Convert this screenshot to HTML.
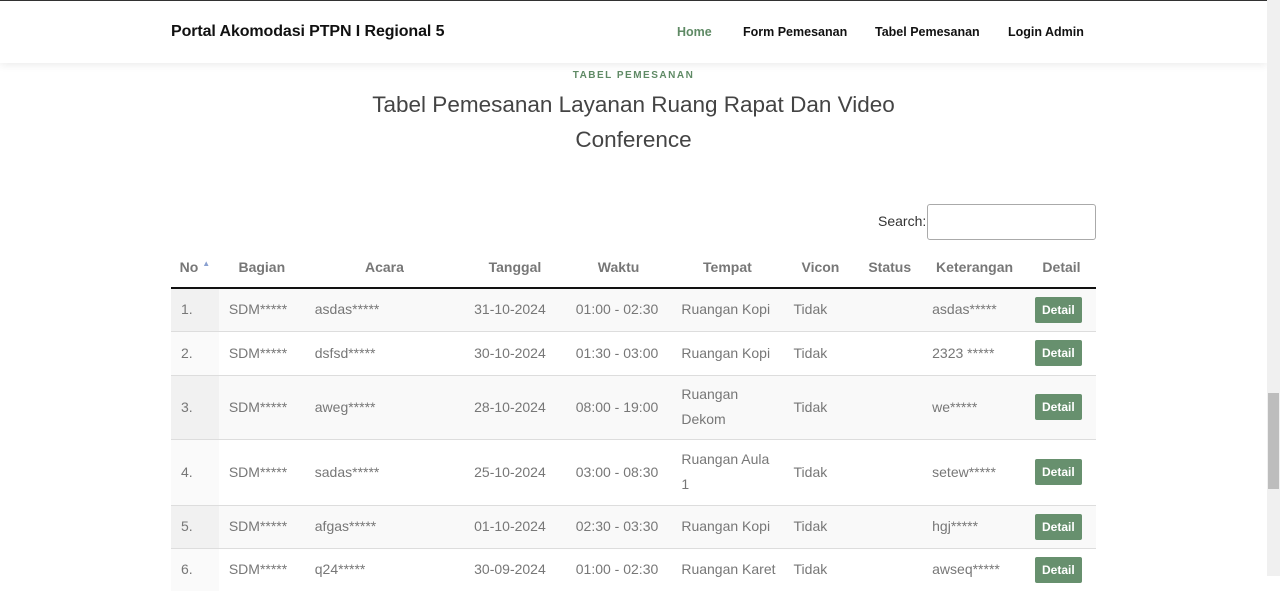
<!DOCTYPE html>
<html><head><meta charset="utf-8"><style>
*{box-sizing:border-box;margin:0;padding:0}
body{width:1280px;height:576px;overflow:hidden;background:#fff;font-family:"Liberation Sans",Roboto,sans-serif;position:relative}
.top{position:absolute;left:0;top:0;width:1267px;height:1px;background:#333}
.nav{position:absolute;left:0;top:1px;width:1267px;height:62px;background:#fff;box-shadow:0 2px 8px rgba(0,0,0,.08)}
.brand{position:absolute;left:171px;top:22px;font-weight:bold;font-size:16px;color:#111;letter-spacing:-0.1px}
.nav a{position:absolute;top:24px;font-size:12.5px;font-weight:bold;color:#111;text-decoration:none}
.sb{position:absolute;right:0;top:0;width:13px;height:576px;background:#f0f0f0}
.thumb{position:absolute;right:1px;top:393px;width:11px;height:96px;background:#bdbdbd}
.kick{position:absolute;left:0;width:1267px;top:70px;text-align:center;font-size:10px;font-weight:bold;letter-spacing:1.5px;color:#5f8a65}
h1{position:absolute;left:0;width:1267px;top:87px;text-align:center;font-weight:normal;font-size:22.5px;line-height:35px;color:#444}
.search{position:absolute;left:878px;top:213px;font-size:14px;color:#333}
.inp{position:absolute;left:927px;top:204px;width:169px;height:36px;border:1px solid #aaa;border-radius:3px}
table{position:absolute;left:171px;top:246px;width:925px;border-collapse:collapse;font-size:14px;color:#777}
th{height:42px;border-bottom:2px solid #111;font-weight:bold;color:#777;text-align:center}
td{padding:0 8px 0 10px;border-top:1px solid #ddd;line-height:25px}
tr.o td{background:#f9f9f9}
tr.o td:first-child{background:#f1f1f1}
tr.e td:first-child{background:#fafafa}
.btn{display:inline-block;background:#67906e;color:#fff;font-weight:bold;font-size:12px;padding:0 7px;line-height:26px;border-radius:2px;margin-left:-2px}
.nw{white-space:nowrap}
</style></head><body>
<div class="top"></div>
<div class="nav"><div class="brand">Portal Akomodasi PTPN I Regional 5</div>
<a style="left:677px;color:#5f8a65">Home</a><a style="left:743px">Form Pemesanan</a><a style="left:875px">Tabel Pemesanan</a><a style="left:1008px">Login Admin</a></div>
<div class="kick">TABEL PEMESANAN</div>
<h1>Tabel Pemesanan Layanan Ruang Rapat Dan Video<br>Conference</h1>
<div class="search">Search:</div><div class="inp"></div>
<table>
<colgroup><col style="width:48px"><col style="width:86px"><col style="width:160px"><col style="width:102px"><col style="width:106px"><col style="width:110px"><col style="width:74px"><col style="width:65px"><col style="width:105px"><col style="width:69px"></colgroup>
<tr><th>No <span style="font-size:8px;color:#8aa0d0;vertical-align:top">▲</span></th><th>Bagian</th><th>Acara</th><th>Tanggal</th><th>Waktu</th><th>Tempat</th><th>Vicon</th><th>Status</th><th>Keterangan</th><th>Detail</th></tr>
<tr class="o" style="height:43px"><td>1.</td><td>SDM*****</td><td>asdas*****</td><td>31-10-2024</td><td>01:00 - 02:30</td><td>Ruangan Kopi</td><td>Tidak</td><td></td><td>asdas*****</td><td><span class="btn">Detail</span></td></tr>
<tr class="e" style="height:44px"><td>2.</td><td>SDM*****</td><td>dsfsd*****</td><td>30-10-2024</td><td>01:30 - 03:00</td><td>Ruangan Kopi</td><td>Tidak</td><td></td><td>2323 *****</td><td><span class="btn">Detail</span></td></tr>
<tr class="o" style="height:64px"><td>3.</td><td>SDM*****</td><td>aweg*****</td><td>28-10-2024</td><td>08:00 - 19:00</td><td>Ruangan Dekom</td><td>Tidak</td><td></td><td>we*****</td><td><span class="btn">Detail</span></td></tr>
<tr class="e" style="height:66px"><td>4.</td><td>SDM*****</td><td>sadas*****</td><td>25-10-2024</td><td>03:00 - 08:30</td><td>Ruangan Aula 1</td><td>Tidak</td><td></td><td>setew*****</td><td><span class="btn">Detail</span></td></tr>
<tr class="o" style="height:43px"><td>5.</td><td>SDM*****</td><td>afgas*****</td><td>01-10-2024</td><td>02:30 - 03:30</td><td>Ruangan Kopi</td><td>Tidak</td><td></td><td>hgj*****</td><td><span class="btn">Detail</span></td></tr>
<tr class="e" style="height:43px"><td>6.</td><td>SDM*****</td><td>q24*****</td><td>30-09-2024</td><td>01:00 - 02:30</td><td class="nw">Ruangan Karet</td><td>Tidak</td><td></td><td>awseq*****</td><td><span class="btn">Detail</span></td></tr>
</table>
<div class="sb"><div class="thumb"></div></div>
</body></html>
